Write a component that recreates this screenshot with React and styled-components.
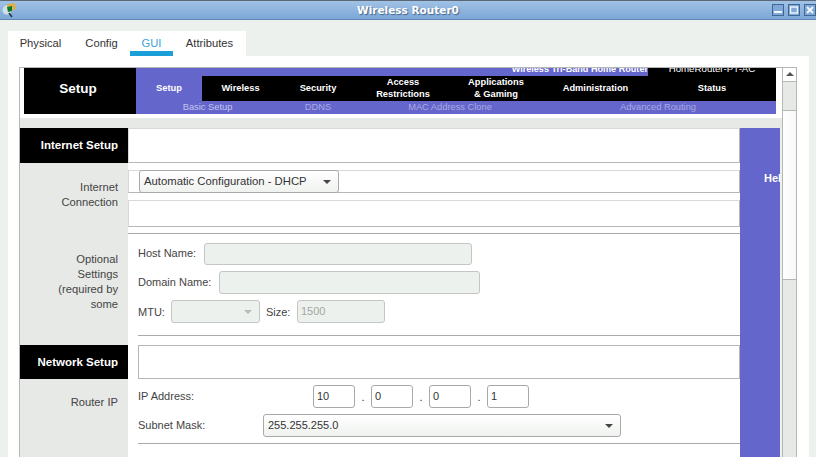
import React from 'react';
import styled, { createGlobalStyle } from 'styled-components';

const GlobalStyle = createGlobalStyle`
  html, body { margin: 0; padding: 0; height: 100%; overflow: hidden; }
  body { font-family: "Liberation Sans", Arial, sans-serif; font-size: 11px; color: #333; }
  #root { height: 100%; }
`;

const purple = '#6466cc';
const line = '#b5b7b5';
const soft = '#e6e9e6';

const Window = styled.div`
  height: 100%;
  display: flex;
  flex-direction: column;
  background: #edf1ee;
  overflow: hidden;
`;

const TitleBar = styled.div`
  position: relative;
  height: 20px;
  flex: none;
  box-sizing: border-box;
  border-top: 1px solid #5c6878;
  border-bottom: 1px solid #5f86b4;
  background: linear-gradient(#a0c2e6, #7da7d6);
  display: flex;
  align-items: center;
  justify-content: center;
`;

const Title = styled.span`
  font-family: "DejaVu Sans", sans-serif;
  font-weight: bold;
  font-size: 10.5px;
  color: #fff;
  text-shadow: 1px 1px 1px #44658f;
`;

const AppIcon = styled.svg`
  position: absolute;
  left: 1px;
  top: 1px;
`;

const WinButtons = styled.div`
  position: absolute;
  right: 0;
  top: 3px;
  display: flex;
  gap: 4px;
`;

const WinButton = styled.div`
  width: 12px;
  height: 12px;
  box-sizing: border-box;
  border: 1px solid #3f6794;
  background: #7fa8d8;
  display: flex;
  align-items: center;
  justify-content: center;
`;

const Body = styled.div`
  flex: 1;
  min-height: 0;
  display: flex;
  flex-direction: column;
  padding: 11px 7px 0 8px;
`;

const TabBar = styled.div`
  display: flex;
  align-self: flex-start;
  height: 25px;
  flex: none;
  background: #fff;
`;

const Tab = styled.div`
  box-sizing: border-box;
  width: ${p => p.$w}px;
  text-align: center;
  line-height: 24px;
  font-size: 11.2px;
  color: ${p => (p.$active ? '#3aa4da' : '#333')};
  border-bottom: 5px solid ${p => (p.$active ? '#1a9fd8' : 'transparent')};
`;

const Panel = styled.div`
  flex: 1;
  min-height: 0;
  background: #fff;
  padding: 11px 12px 0 11px;
  display: flex;
  flex-direction: column;
`;

const Frame = styled.div`
  flex: 1;
  min-height: 0;
  display: flex;
  border-top: 1px solid ${line};
  border-left: 1px solid ${line};
`;

const Page = styled.div`
  flex: 1;
  min-width: 0;
  overflow: hidden;
  display: flex;
  flex-direction: column;
`;

const Header = styled.div`
  flex: none;
  height: 46px;
  margin: 0 7px 4px 4px;
  display: flex;
`;

const HeaderTitle = styled.div`
  width: 108px;
  padding-right: 4px;
  flex: none;
  background: #000;
  color: #fff;
  font-weight: bold;
  font-size: 13.5px;
  line-height: 41px;
  text-align: center;
`;

const HeaderMain = styled.div`
  flex: 1;
  display: flex;
  flex-direction: column;
`;

const Strip = styled.div`
  height: 8px;
  display: flex;
  overflow: hidden;
`;

const ProductName = styled.div`
  width: 512px;
  background: ${purple};
  color: #fff;
  font-weight: bold;
  font-size: 9.1px;
  text-align: right;
  line-height: 8px;
  & > span { display: block; margin-top: -3px; }
`;

const ModelName = styled.div`
  flex: 1;
  background: #000;
  color: #fff;
  font-size: 9.7px;
  text-align: center;
  line-height: 8px;
  & > span { display: block; margin-top: -3px; }
`;

const columns = '66px 77px 78px 92px 94px 105px 128px';

const NavRow = styled.div`
  height: 25px;
  display: grid;
  grid-template-columns: ${columns};
  background: #000;
`;

const NavItem = styled.div`
  display: flex;
  align-items: center;
  justify-content: center;
  text-align: center;
  box-sizing: border-box;
  padding-bottom: 2px;
  background: ${p => (p.$active ? purple : '#000')};
  color: #fff;
  font-weight: bold;
  font-size: 9.3px;
  line-height: 12px;
`;

const SubRow = styled.div`
  height: 13px;
  display: grid;
  grid-template-columns: ${columns};
  background: ${purple};
`;

const SubItem = styled.div`
  grid-column: span ${p => p.$span};
  text-align: center;
  color: ${p => (p.$bright ? '#c4c5ee' : '#a9aae0')};
  font-size: 9.3px;
  line-height: 12px;
  padding-right: ${p => p.$pad || 0}px;
`;

const Band = styled.div`
  height: 10px;
  flex: none;
  background: ${soft};
`;

const Columns = styled.div`
  flex: 1;
  display: flex;
  background: #edf1ee;
  min-height: 0;
`;

const Side = styled.div`
  width: 108px;
  flex: none;
  background: ${soft};
`;

const SideHead = styled.div`
  height: ${p => p.$h}px;
  background: #000;
  color: #fff;
  font-weight: bold;
  font-size: 11.5px;
  line-height: ${p => p.$h}px;
  text-align: right;
  padding-right: 10px;
`;

const SideBlock = styled.div`
  height: ${p => p.$h}px;
  box-sizing: border-box;
  padding: ${p => p.$top}px 10px 0 0;
  text-align: right;
  line-height: 15px;
  font-size: 11.2px;
  color: #444;
`;

const Main = styled.div`
  width: 612px;
  flex: none;
  background: #fff;
  display: flex;
  flex-direction: column;
`;

const Box = styled.div`
  box-sizing: border-box;
  height: ${p => p.$h}px;
  margin: ${p => p.$mt || 0}px 0 0 ${p => p.$ml || 0}px;
  border: 1px solid ${line};
  border-left-color: ${p => (p.$ml ? line : '#d8dad8')};
  border-top-color: ${p => (p.$ml ? line : '#d8dad8')};
  flex: none;
`;

const Rule = styled.div`
  height: 1px;
  flex: none;
  background: #a9aaa9;
  margin: ${p => p.$mt}px 0 0 ${p => p.$ml || 0}px;
`;

const Form = styled.div`
  padding: ${p => p.$top}px 0 0 10px;
  display: flex;
  flex-direction: column;
  gap: 6px;
`;

const Row = styled.div`
  display: flex;
  align-items: center;
  gap: ${p => p.$gap || 8}px;
  color: #444;
`;

const FieldLabel = styled.div`
  width: ${p => (p.$w ? `${p.$w}px` : 'auto')};
  flex: none;
  padding-bottom: 2px;
  color: #444;
`;

const Select = styled.div`
  box-sizing: border-box;
  width: ${p => p.$w}px;
  height: 23px;
  margin: ${p => p.$mt || 0}px 0 0 ${p => p.$ml || 0}px;
  flex: none;
  display: flex;
  align-items: center;
  justify-content: space-between;
  padding: 0 7px 2px 4px;
  border: 1px solid ${p => (p.$off ? '#c3c7c3' : '#a8aaa8')};
  border-radius: 3px;
  background: ${p => (p.$off ? '#edf1ee' : 'linear-gradient(#fff, #eff2ef)')};
  color: #333;
  font-size: ${p => p.$fs || 11}px;
`;

const Caret = styled.span`
  width: 0;
  height: 0;
  margin-top: 2px;
  border-left: 4px solid transparent;
  border-right: 4px solid transparent;
  border-top: 4px solid ${p => (p.$off ? '#b8bcb8' : '#444')};
`;

const TextInput = styled.div`
  box-sizing: border-box;
  width: ${p => p.$w}px;
  height: ${p => p.$h}px;
  flex: none;
  padding-left: 3px;
  line-height: ${p => p.$h - 2}px;
  border: 1px solid ${p => (p.$off ? '#c3c7c3' : '#a8aaa8')};
  border-radius: 3px;
  background: ${p => (p.$off ? '#edf1ee' : '#fff')};
  color: ${p => (p.$off ? '#a3a6a3' : '#333')};
  font-size: 11px;
`;

const SizeLabel = styled.span`
  width: 25px;
`;

const IpGroup = styled.div`
  display: flex;
  align-items: center;
`;

const Dot = styled.span`
  width: 16px;
  text-align: center;
  color: #333;
`;

const Help = styled.div`
  width: 40px;
  flex: none;
  background: ${purple};
  overflow: hidden;
  box-sizing: border-box;
  padding: 44px 0 0 24px;
  color: #fff;
  font-weight: bold;
  font-size: 11px;
  line-height: 13px;
  white-space: nowrap;
`;

const Scrollbar = styled.div`
  width: 15px;
  flex: none;
  box-sizing: border-box;
  border-left: 1px solid ${line};
  border-right: 1px solid ${line};
  display: flex;
  flex-direction: column;
`;

const ScrollArrow = styled.div`
  height: 14px;
  box-sizing: border-box;
  padding-bottom: 2px;
  border-bottom: 1px solid ${line};
  display: flex;
  align-items: center;
  justify-content: center;
  &::before {
    content: "";
    border-left: 4px solid transparent;
    border-right: 4px solid transparent;
    border-bottom: 4px solid #555;
  }
`;

const ScrollThumb = styled.div`
  height: ${p => (p.$h ? `${p.$h}px` : 'auto')};
  flex: ${p => (p.$h ? 'none' : '1')};
  background: ${soft};
  box-sizing: border-box;
  border-${p => (p.$h ? 'bottom' : 'top')}: 1px solid ${line};
`;

const ScrollTrack = styled.div`
  height: 168px;
  background: linear-gradient(90deg, #fff, #f6f8f6);
`;

const nav = [
  ['Setup', true],
  ['Wireless'],
  ['Security'],
  [<>Access<br />Restrictions</>],
  [<>Applications<br />& Gaming</>],
  ['Administration'],
  ['Status'],
];

export default function App() {
  return (
    <Window>
      <GlobalStyle />
      <TitleBar>
        <AppIcon width="16" height="16" viewBox="0 0 16 16">
          <circle cx="6" cy="8" r="4.5" fill="#cfe0ea" />
          <path d="M6 2 L14 1 L15 7 L7 10 Z" fill="#d9b04c" />
          <path d="M6 5 L11 4 L11 9 L7 10 Z" fill="#0f7a2c" />
          <path d="M8 11 L11 15" stroke="#27353f" strokeWidth="1.6" />
        </AppIcon>
        <Title>Wireless Router0</Title>
        <WinButtons>
          <WinButton>
            <svg width="8" height="8" viewBox="0 0 8 8"><rect x="0" y="5" width="8" height="2" fill="#f2f6fb" /></svg>
          </WinButton>
          <WinButton>
            <svg width="8" height="8" viewBox="0 0 8 8"><rect x="0.5" y="1" width="7" height="6" fill="none" stroke="#f2f6fb" strokeWidth="1.4" /></svg>
          </WinButton>
          <WinButton>
            <svg width="8" height="8" viewBox="0 0 8 8"><path d="M1 1 L7 7 M7 1 L1 7" stroke="#f2f6fb" strokeWidth="2" /></svg>
          </WinButton>
        </WinButtons>
      </TitleBar>

      <Body>
        <TabBar>
          <Tab $w={65}>Physical</Tab>
          <Tab $w={57}>Config</Tab>
          <Tab $w={43} $active>GUI</Tab>
          <Tab $w={73}>Attributes</Tab>
        </TabBar>

        <Panel>
          <Frame>
            <Page>
              <Header>
                <HeaderTitle>Setup</HeaderTitle>
                <HeaderMain>
                  <Strip>
                    <ProductName><span>Wireless Tri-Band Home Router</span></ProductName>
                    <ModelName><span>HomeRouter-PT-AC</span></ModelName>
                  </Strip>
                  <NavRow>
                    {nav.map(([label, active], i) => (
                      <NavItem key={i} $active={active}>{label}</NavItem>
                    ))}
                  </NavRow>
                  <SubRow>
                    <SubItem $span={2} $bright>Basic Setup</SubItem>
                    <SubItem $span={1}>DDNS</SubItem>
                    <SubItem $span={2}>MAC Address Clone</SubItem>
                    <SubItem $span={2} $pad={3}>Advanced Routing</SubItem>
                  </SubRow>
                </HeaderMain>
              </Header>
              <Band />

              <Columns>
                <Side>
                  <SideHead $h={35}>Internet Setup</SideHead>
                  <SideBlock $h={72} $top={17}>Internet<br />Connection</SideBlock>
                  <SideBlock $h={110} $top={17}>Optional<br />Settings<br />(required by<br />some</SideBlock>
                  <SideHead $h={34}>Network Setup</SideHead>
                  <SideBlock $h={80} $top={16}>Router IP</SideBlock>
                </Side>

                <Main>
                  <Box $h={35} />
                  <Box $h={23} $mt={7}>
                    <Select $w={200} $ml={10} $mt={-1} $fs={11.3}>
                      Automatic Configuration - DHCP
                      <Caret />
                    </Select>
                  </Box>
                  <Box $h={27} $mt={7} />
                  <Rule $mt={6} />

                  <Form $top={9}>
                    <Row><FieldLabel>Host Name:</FieldLabel><TextInput $off $w={268} $h={22} /></Row>
                    <Row><FieldLabel>Domain Name:</FieldLabel><TextInput $off $w={261} $h={23} /></Row>
                    <Row $gap={6}>
                      MTU:
                      <Select $off $w={89}><span /><Caret $off /></Select>
                      <SizeLabel>Size:</SizeLabel>
                      <TextInput $off $w={88} $h={23}>1500</TextInput>
                    </Row>
                  </Form>
                  <Rule $mt={12} $ml={10} />

                  <Box $h={34} $mt={9} $ml={10} />
                  <Form $top={6}>
                    <Row>
                      <FieldLabel $w={167}>IP Address:</FieldLabel>
                      <IpGroup>
                        <TextInput $w={42} $h={23}>10</TextInput>
                        <Dot>.</Dot>
                        <TextInput $w={42} $h={23}>0</TextInput>
                        <Dot>.</Dot>
                        <TextInput $w={42} $h={23}>0</TextInput>
                        <Dot>.</Dot>
                        <TextInput $w={42} $h={23}>1</TextInput>
                      </IpGroup>
                    </Row>
                    <Row>
                      <FieldLabel $w={117}>Subnet Mask:</FieldLabel>
                      <Select $w={358}>
                        255.255.255.0
                        <Caret />
                      </Select>
                    </Row>
                  </Form>
                  <Rule $mt={6} $ml={10} />
                </Main>

                <Help>Help</Help>
              </Columns>
            </Page>

            <Scrollbar>
              <ScrollArrow />
              <ScrollThumb $h={29} />
              <ScrollTrack />
              <ScrollThumb />
            </Scrollbar>
          </Frame>
        </Panel>
      </Body>
    </Window>
  );
}
